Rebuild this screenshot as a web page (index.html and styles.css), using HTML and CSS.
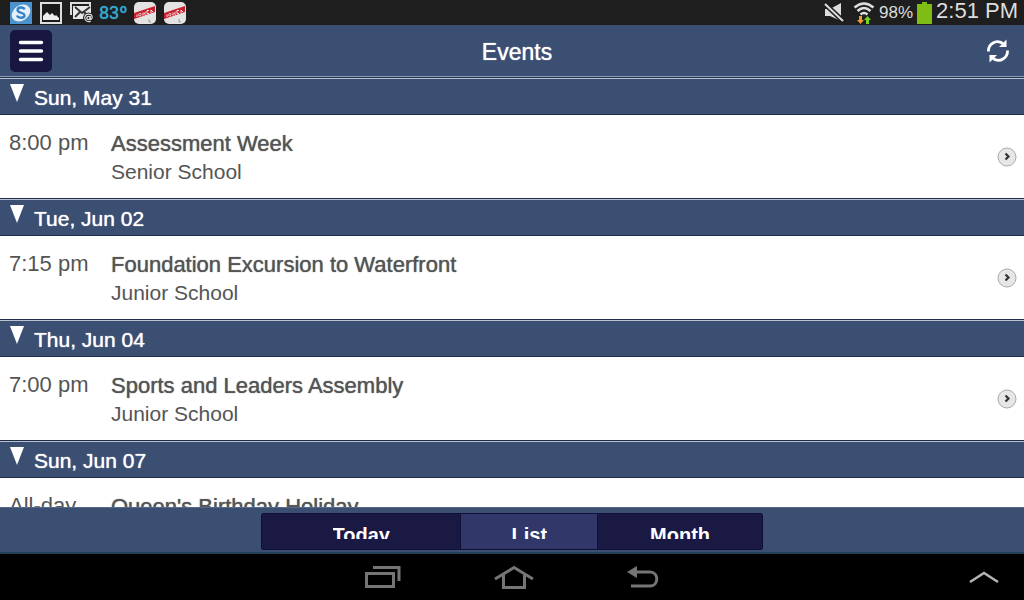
FILE: index.html
```html
<!DOCTYPE html>
<html lang="en">
<head>
<meta charset="utf-8">
<meta name="viewport" content="width=device-width, initial-scale=1">
<title>Events</title>
<link rel="stylesheet" href="styles.css">
</head>
<body>
<div class="screen">
  <div class="status">
    <div class="status-group">
      <svg width="22" height="22" viewBox="0 0 22 22"><path fill="#4b93cf" d="M0 0h22v22H0z"/><ellipse cx="11" cy="11" rx="10" ry="7.500" fill="#e4eff8" transform="rotate(-35 11 11)"/><path d="M14.500 7.500c-1-3-7-2.500-7 .5 0 3.500 7 2 7 5.500 0 3-6.500 3-7.500 0" fill="none" stroke="#3181c4" stroke-width="2.300"/></svg>
      <svg width="22" height="22" viewBox="0 0 22 22"><path d="M1 1h20v20H1z" fill="#1a1a1a" stroke="#ddd" stroke-width="2"/><path d="M3 18v-4l4-4 3 3 2-2 3 3 1-1 3 3v2z" fill="#eee"/></svg>
      <svg width="24" height="22" viewBox="0 0 24 22"><path d="M1 13V1h19v3" fill="none" stroke="#ddd" stroke-width="2"/><path d="M3 4h18v13H3z" fill="#e8e8e8"/><path d="M5 5l7 6 8-6M5 15l5-5M18 14l-4-4" fill="none" stroke="#333" stroke-width="2"/><circle cx="18.500" cy="16" r="5.500" fill="#1e1e1e"/><circle cx="18.500" cy="16" r="1.700" fill="none" stroke="#ddd" stroke-width="1.300"/><path d="M20.200 14v3c1 1 2-.5 2-2-.5-4-7-4-7.500.5 0 4 4 5 6 3.500" fill="none" stroke="#ddd" stroke-width="1.200"/></svg>
      <span class="temp">83º</span>
      <svg class="app" width="24" height="22" viewBox="0 0 24 22"><rect x="1" width="22" height="22" rx="5" fill="#e5e2e2"/><path d="M1 11L22 4v6L1 17z" fill="#c8202f"/><path d="M4 12.500v2.500M7 11.500c-2 0-1.500 3 0 2.500s1.500-3 0-2.500M10 10.500v3M13 9.500l-2 2 2 1M16 8.500h-2v3h2M18 11V8l2 2" fill="none" stroke="#f6dfe0"/><path d="M16 17v3h2" fill="none" stroke="#999"/></svg>
      <svg class="app" width="24" height="22" viewBox="0 0 24 22"><rect x="1" width="22" height="22" rx="5" fill="#e5e2e2"/><path d="M1 11L22 4v6L1 17z" fill="#c8202f"/><path d="M4 12.500v2.500M7 11.500c-2 0-1.500 3 0 2.500s1.500-3 0-2.500M10 10.500v3M13 9.500l-2 2 2 1M16 8.500h-2v3h2M18 11V8l2 2" fill="none" stroke="#f6dfe0"/><path d="M16 17v3h2" fill="none" stroke="#999"/></svg>
    </div>
    <div class="status-group status-right">
      <svg class="mute" width="20" height="20" viewBox="0 0 20 20"><path d="M1 6h5l11-6v18L6 13H1z" fill="#ddd"/><path d="M0 0l20 19" stroke="#1e1e1e" stroke-width="5"/><path d="M1 1l18 17" stroke="#ddd" stroke-width="2"/></svg>
      <svg width="22" height="22" viewBox="0 0 22 22"><path d="M1.500 5.500q9.500-8 19 0M4.500 9q6.500-6 13 0M7.500 12.500q3.500-3 7 0" fill="none" stroke="#ddd" stroke-width="2.400"/><path d="M6 14h3v4h2l-3.500 4L4 18h2z" fill="#f09a32"/><path d="M13 22h3v-4h2l-3.500-4-3.500 4h2z" fill="#78d321"/></svg>
      <span class="percent">98%</span>
      <svg width="15" height="22" viewBox="0 0 15 22"><path d="M0 2h5V0h5v2h5v20H0z" fill="#80bd14"/></svg>
      <span class="clock">2:51 PM</span>
    </div>
  </div>

  <header class="bar">
    <button class="menu" aria-label="Menu"><svg width="26" height="24" viewBox="0 0 26 24"><path d="M2.500 3.500h21M2.500 12h21M2.500 20.500h21" stroke="#fff" stroke-width="3.400" stroke-linecap="round"/></svg></button>
    <h1 class="title">Events</h1>
    <button class="refresh" aria-label="Refresh"><svg width="24" height="24" viewBox="0 0 24 24"><path d="M2.500 12.500C2 5 10 0 17 4.500M21.500 11.500C22 19 14 24 7 19.500" fill="none" stroke="#fff" stroke-width="2.800"/><path d="M20.500.5v7.500H13zM3.500 23.500V16H11z" fill="#fff"/></svg></button>
  </header>

  <main class="list">
    <section>
      <h2 class="day"><svg class="tri" width="14" height="18" viewBox="0 0 14 18"><path d="M0 0h14L7 18z" fill="#fff"/></svg>Sun, May 31</h2>
      <a class="event" href="#"><span class="time">8:00 pm</span><span class="info"><span class="name">Assessment Week</span><span>Senior School</span></span><svg class="go" width="20" height="20" viewBox="0 0 20 20"><circle cx="10" cy="10" r="9" fill="#e6e6e6" stroke="#aaa"/><path d="M8.500 6.500l3 3-3 3" fill="none" stroke="#333" stroke-width="2.200"/></svg></a>
    </section>
    <section>
      <h2 class="day"><svg class="tri" width="14" height="18" viewBox="0 0 14 18"><path d="M0 0h14L7 18z" fill="#fff"/></svg>Tue, Jun 02</h2>
      <a class="event" href="#"><span class="time">7:15 pm</span><span class="info"><span class="name">Foundation Excursion to Waterfront</span><span>Junior School</span></span><svg class="go" width="20" height="20" viewBox="0 0 20 20"><circle cx="10" cy="10" r="9" fill="#e6e6e6" stroke="#aaa"/><path d="M8.500 6.500l3 3-3 3" fill="none" stroke="#333" stroke-width="2.200"/></svg></a>
    </section>
    <section>
      <h2 class="day"><svg class="tri" width="14" height="18" viewBox="0 0 14 18"><path d="M0 0h14L7 18z" fill="#fff"/></svg>Thu, Jun 04</h2>
      <a class="event" href="#"><span class="time">7:00 pm</span><span class="info"><span class="name">Sports and Leaders Assembly</span><span>Junior School</span></span><svg class="go" width="20" height="20" viewBox="0 0 20 20"><circle cx="10" cy="10" r="9" fill="#e6e6e6" stroke="#aaa"/><path d="M8.500 6.500l3 3-3 3" fill="none" stroke="#333" stroke-width="2.200"/></svg></a>
    </section>
    <section>
      <h2 class="day"><svg class="tri" width="14" height="18" viewBox="0 0 14 18"><path d="M0 0h14L7 18z" fill="#fff"/></svg>Sun, Jun 07</h2>
      <a class="event" href="#"><span class="time">All-day</span><span class="info"><span class="name">Queen's Birthday Holiday</span></span></a>
    </section>
  </main>

  <footer class="toolbar">
    <div class="tabs">
      <button class="tab today"><span class="label">Today</span></button>
      <button class="tab current" aria-pressed="true"><span class="label">List</span></button>
      <button class="tab month"><span class="label">Month</span></button>
    </div>
  </footer>

  <nav class="nav">
    <span class="side"></span>
    <div class="keys">
      <button aria-label="Recent apps"><svg width="36" height="24" viewBox="0 0 36 24"><path d="M1.500 8.500h27v13h-27zM8 2.500h26V16" fill="none" stroke="#757575" stroke-width="3"/></svg></button>
      <button aria-label="Home"><svg width="40" height="24" viewBox="0 0 40 24"><path d="M1 14L20 2.500 39 14M9.500 10v12.500h21V10" fill="none" stroke="#757575" stroke-width="3"/></svg></button>
      <button aria-label="Back"><svg width="32" height="24" viewBox="0 0 32 24"><path d="M8 7h15c9 0 9 14 0 14H4" fill="none" stroke="#757575" stroke-width="3"/><path d="M0 7l10-6v12z" fill="#757575"/></svg></button>
    </div>
    <div class="side"><button aria-label="Show tray"><svg width="30" height="14" viewBox="0 0 30 14"><path d="M1 12L15 3l14 9" fill="none" stroke="#b4b4b4" stroke-width="2.500"/></svg></button></div>
  </nav>
</div>
</body>
</html>
```
FILE: styles.css
```css
* { box-sizing: border-box; }
body {
  margin: 0;
  font-family: "Liberation Sans", Arial, sans-serif;
  font-size: 21px;
  line-height: 28px;
  color: #555;
  background: #000;
}
button { border: 0; padding: 0; background: none; color: inherit; font: inherit; }
svg { display: block; flex: none; }

.screen { display: flex; flex-direction: column; height: 100vh; }

.status {
  display: flex;
  justify-content: space-between;
  height: 25px;
  padding: 0 6px 0 10px;
  background: #1e1e1e;
  color: #ddd;
  line-height: 24px;
}
.status-group { display: flex; align-items: center; gap: 8px; }
.status-right { gap: 4px; }
.mute { margin-right: 5px; }
.app { margin-right: -2px; }
.temp {
  width: 26px;
  margin-left: -3px;
  font-family: "Liberation Sans Narrow", Roboto, sans-serif;
  font-size: 18px;
  color: #35a9cf;
  text-shadow: 0 0 1px #35a9cf;
}
.percent { font-size: 17px; }
.clock { padding-bottom: 3px; font-size: 22px; }

.bar {
  display: grid;
  grid-template-columns: 1fr auto 1fr;
  align-items: center;
  height: 53px;
  padding: 0 14px 0 10px;
  background: #3b4f73;
  border-bottom: 1px solid #26334f;
  box-shadow: inset 0 -1px #8d9ab4;
  color: #fff;
}
.menu {
  display: grid;
  place-items: center;
  width: 42px;
  height: 42px;
  border-radius: 5px;
  background: #171742;
}
.title { margin: 0; padding: 2px 0 0 14px; font-size: 23px; font-weight: 400; text-shadow: 0 0 1px #fff; }
.refresh { justify-self: end; }

.list { flex: 1; min-height: 0; overflow: hidden; background: #fff; }
.day {
  display: flex;
  align-items: center;
  gap: 10px;
  height: 37px;
  margin: 0;
  padding: 2px 10px 0;
  border-top: 1px solid #b9c2d1;
  border-bottom: 1px solid #202c4a;
  background: #3b4f73;
  color: #fff;
  font-size: 21px;
  font-weight: 400;
  text-shadow: 0 0 1px #fff;
}
.tri { align-self: flex-start; margin-top: 3px; }
.event {
  display: flex;
  height: 84px;
  padding: 14px 7px 0 9px;
  border-bottom: 1px solid #202c4a;
  color: inherit;
  text-decoration: none;
}
.time { width: 102px; font-size: 22px; }
.info { display: flex; flex: 1; flex-direction: column; padding-top: 1px; }
.name { font-size: 22px; text-shadow: 0 0 1px #555; }
.go { margin-top: 18px; }

.toolbar {
  display: flex;
  justify-content: center;
  height: 47px;
  padding: 5px 0 2px;
  border-top: 1px solid #55688a;
  border-bottom: 2px solid #23405a;
  background: #3b4f73;
}
.tabs { display: flex; width: 49%; border: 1px solid #10103a; border-radius: 2px; }
.tab {
  display: flex;
  align-items: flex-start;
  justify-content: center;
  padding-top: 8px;
  background: #191944;
  color: #fff;
  font-size: 20px;
  font-weight: 700;
}
.today { flex: 200; }
.current { flex: 137; background: #32376a; border: solid #10103a; border-width: 0 1px; }
.month { flex: 165; }
.label { display: block; height: 17px; overflow: hidden; line-height: 26px; }

.nav {
  display: grid;
  grid-template-columns: 1fr auto 1fr;
  align-items: center;
  height: 46px;
  background: #000;
}
.keys { display: flex; gap: 93px; }
.side { display: flex; justify-content: flex-end; padding-right: 25px; }
```
